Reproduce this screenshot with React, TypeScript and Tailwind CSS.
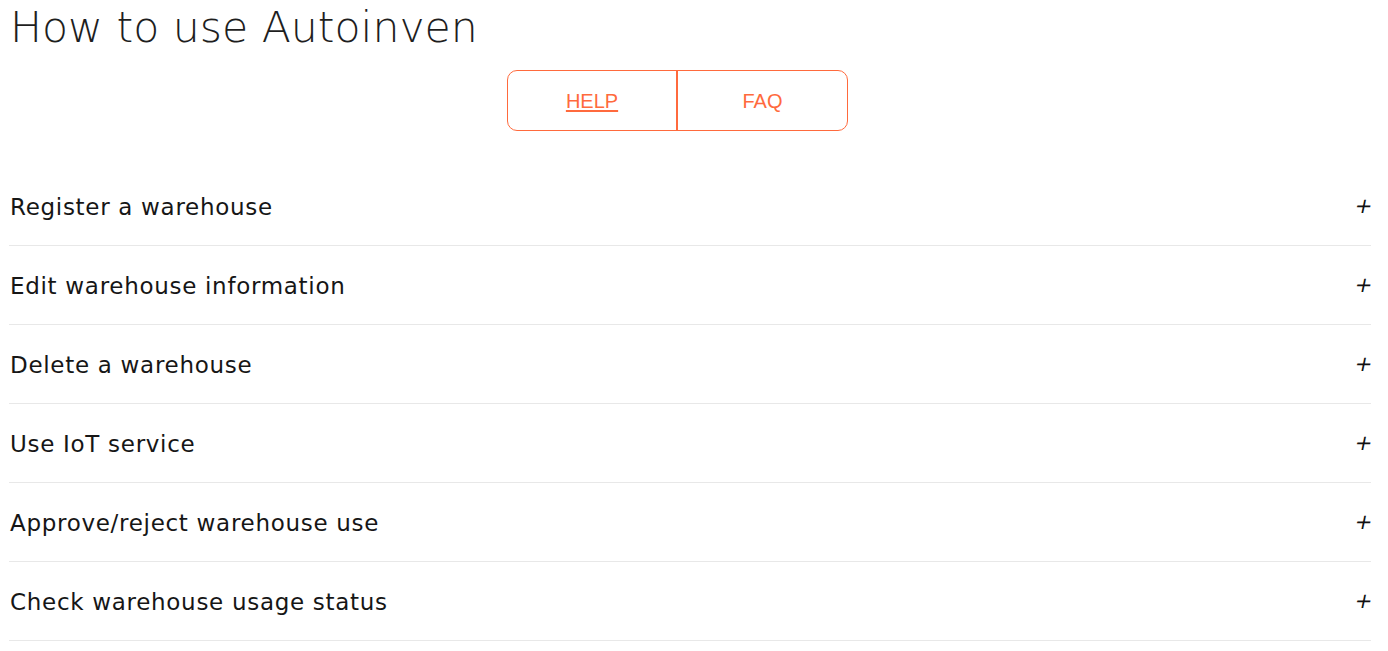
import React from "react";

const items = [
  "Register a warehouse",
  "Edit warehouse information",
  "Delete a warehouse",
  "Use IoT service",
  "Approve/reject warehouse use",
  "Check warehouse usage status",
];

export default function App() {
  return (
    <div className="min-h-screen bg-white px-[9px]" style={{ fontFamily: '"DejaVu Sans", sans-serif' }}>
      <h1 className="pl-[1px] pt-[2px] text-[42.6px] font-extralight leading-[50px] text-[#1e1e1e]">
        How to use Autoinven
      </h1>
      <div className="mt-[18px] ml-[498px] flex h-[61px] w-[341px] rounded-[10px] border border-[#ff6a3d]" style={{ fontFamily: '"Liberation Sans", Arial, sans-serif' }}>
        <button className="flex w-[170px] items-center justify-center border-r-2 border-[#ff6a3d] text-[20px] text-[#ff6a3d] underline underline-offset-2">
          HELP
        </button>
        <button className="flex flex-1 items-center justify-center text-[20px] text-[#ff6a3d]">
          FAQ
        </button>
      </div>
      <div className="mt-[36px] w-[1362px]">
        {items.map((t) => (
          <div key={t} className="flex h-[79px] items-center justify-between border-b border-[#e8e8e8] pl-[1px]">
            <span className="pt-[3px] text-[23px] font-normal tracking-[0.7px] text-[#161616]">{t}</span>
            <span className="-mr-[2px] inline-block -skew-x-12 pt-[2px] text-[21px] text-[#111]">+</span>
          </div>
        ))}
      </div>
    </div>
  );
}
